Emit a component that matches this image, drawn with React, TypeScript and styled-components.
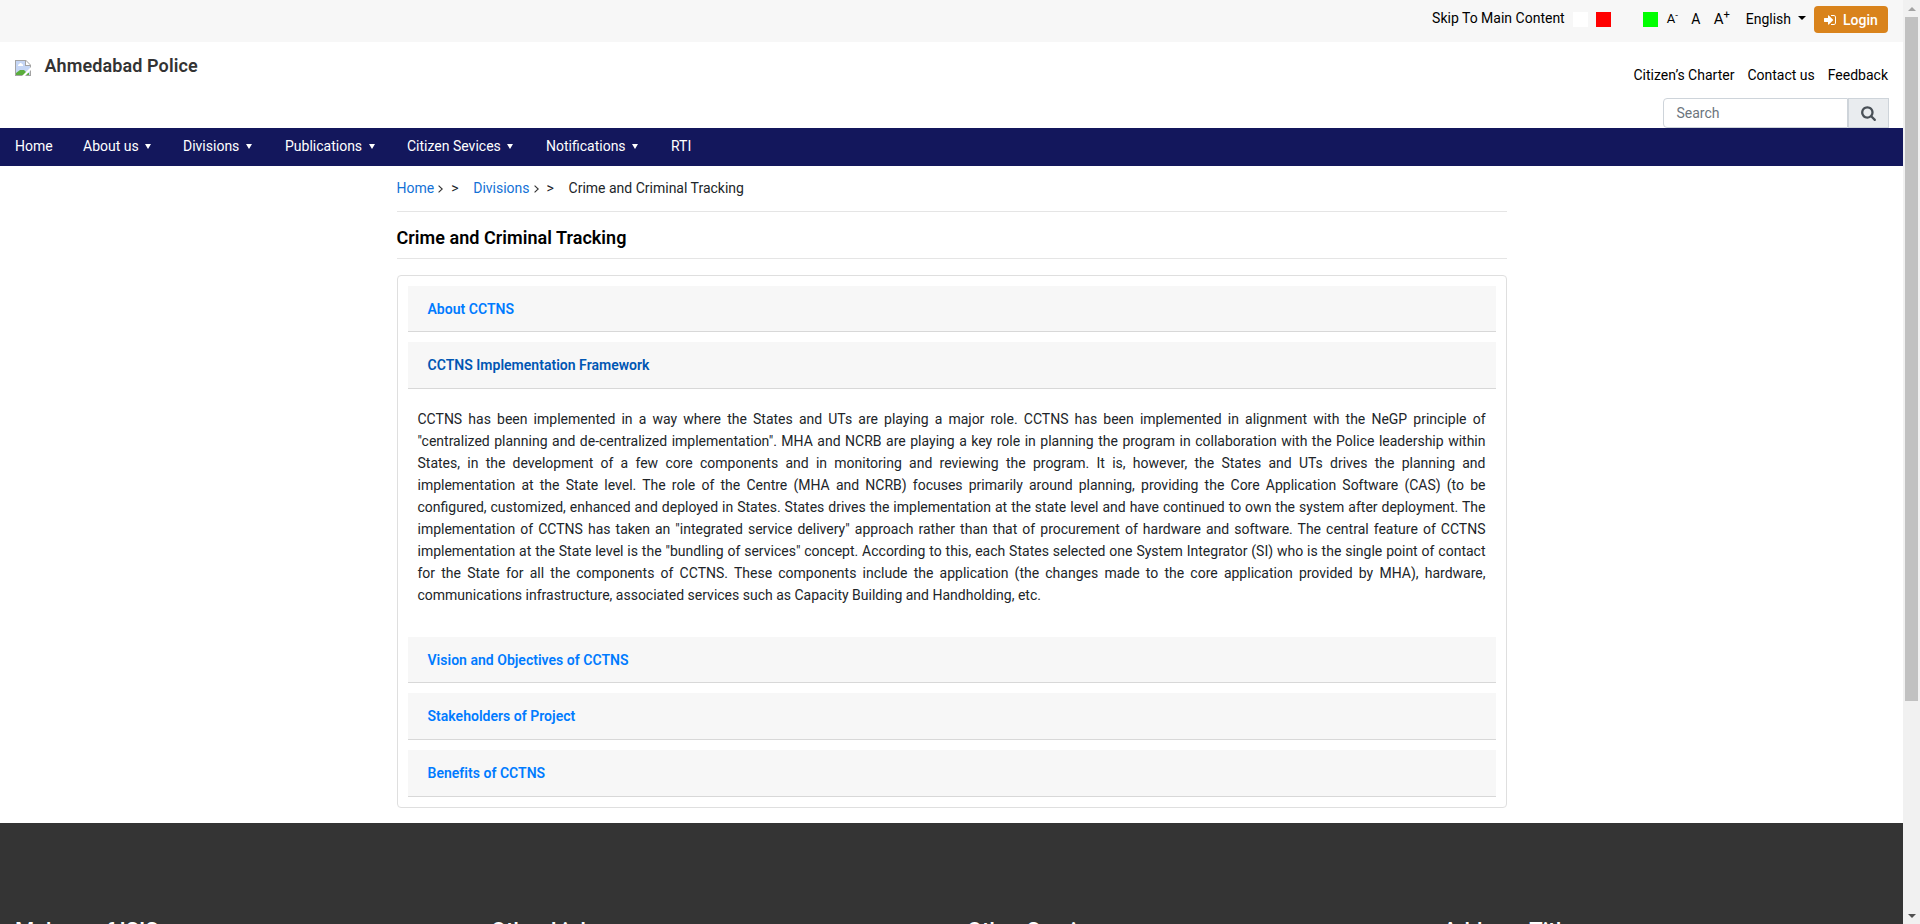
import React from 'react';
import styled, { createGlobalStyle } from 'styled-components';

const GlobalStyle = createGlobalStyle`
  *, *::before, *::after { box-sizing: border-box; }
  html, body { margin: 0; height: 924px; overflow: hidden; }
  body {
    background: #fff;
    color: #212529;
    font-family: Roboto, 'Liberation Sans', sans-serif;
    font-size: 14px;
    line-height: 22px;
  }
  a { text-decoration: none; color: inherit; }
  h1, h2, h3, p { margin: 0; }
`;

const Window = styled.div`
  display: flex;
  height: 924px;
  overflow: hidden;
`;

const Page = styled.div`
  display: flex;
  flex-direction: column;
  width: 1903px;
  height: 924px;
  overflow: hidden;
`;

const TopBar = styled.div`
  flex: none;
  display: flex;
  justify-content: flex-end;
  align-items: flex-start;
  height: 42px;
  padding: 6px 15px 0 0;
  background: #f7f7f7;
  color: #000;
`;

const SkipLink = styled.a`
  margin: 1px 8px 0 0;
`;

const Swatch = styled.span<{ $color: string }>`
  width: 15px;
  height: 15px;
  margin: 6px 8.5px 0 0;
  background: ${(p) => p.$color};
`;

const FontSize = styled.a<{ $size: number; $width: number }>`
  width: ${(p) => p.$width}px;
  margin-top: 2px;
  font-size: ${(p) => p.$size}px;
  white-space: nowrap;
  sup {
    position: relative;
    top: -0.5em;
    font-size: 75%;
    line-height: 0;
    vertical-align: baseline;
  }
`;

const Language = styled.a`
  display: flex;
  align-items: center;
  gap: 7px;
  margin: 2px 8px 0 0;
  &::after {
    content: '';
    margin-top: -3px;
    border: 4px solid transparent;
    border-top-color: #000;
    border-bottom: 0;
  }
`;

const LoginButton = styled.a`
  display: flex;
  align-items: center;
  gap: 7px;
  width: 74px;
  height: 27px;
  padding-left: 10px;
  border-radius: 4px;
  background: #d9831c;
  color: #fff;
  font-weight: 500;
`;

const Header = styled.header`
  flex: none;
  display: flex;
  justify-content: space-between;
  height: 86px;
  padding: 0 14px 0 15px;
`;

const Brand = styled.a`
  display: flex;
  align-items: flex-start;
  gap: 13.5px;
  padding-top: 13px;
  color: #333;
  font-size: 18px;
  font-weight: 600;
  letter-spacing: 0.1px;
  svg { margin-top: 5px; }
`;

const HeaderRight = styled.div`
  display: flex;
  flex-direction: column;
  align-items: flex-end;
  padding-top: 22px;
`;

const QuickLinks = styled.div`
  display: flex;
  gap: 13px;
  padding-right: 1px;
  color: #000;
`;

const SearchBox = styled.div`
  display: flex;
  width: 226px;
  height: 30px;
  margin-top: 12px;
`;

const SearchField = styled.div`
  width: 185px;
  padding: 3px 12.5px;
  border: 1px solid #ced4da;
  border-radius: 4px 0 0 4px;
  color: #6c757d;
`;

const SearchButton = styled.div`
  display: flex;
  align-items: center;
  justify-content: center;
  width: 41px;
  border: 1px solid #ced4da;
  background: #e9ecef;
`;

const Nav = styled.nav`
  flex: none;
  display: flex;
  height: 38px;
  padding: 7px 15px 0;
  background: #13175c;
  color: #fff;
`;

const NavItem = styled.a<{ $width: number }>`
  display: flex;
  align-items: center;
  align-self: flex-start;
  gap: 6.5px;
  width: ${(p) => p.$width}px;
  white-space: nowrap;
`;

const NavArrow = styled.span`
  margin-top: 1px;
  border: 3px solid transparent;
  border-top: 5px solid #fff;
  border-bottom: 0;
`;

const Main = styled.main`
  flex: none;
  width: 1110px;
  height: 657px;
  margin: 0 auto;
`;

const Breadcrumb = styled.div`
  display: flex;
  height: 46px;
  padding-top: 11px;
  border-bottom: 1px solid #e5e5e5;
`;

const Crumb = styled.a`
  color: #1371d6;
`;

const Chevron = styled.svg`
  width: 5px;
  height: 8px;
  margin: 8px 8px 0 4px;
`;

const Separator = styled.span`
  width: 22px;
`;

const Title = styled.h1`
  height: 47px;
  padding-top: 15px;
  border-bottom: 1px solid #e5e5e5;
  color: #000;
  font-size: 18px;
  font-weight: 600;
  letter-spacing: 0.04px;
`;

const Accordion = styled.section`
  margin-top: 16px;
  padding: 10px;
  border: 1px solid #dfdfdf;
  border-radius: 4px;
`;

const Panel = styled.div`
  margin-bottom: 10px;
  &:last-child { margin-bottom: 0; }
`;

const PanelHeader = styled.h2<{ $height: number; $active?: boolean }>`
  height: ${(p) => p.$height}px;
  padding: 12px 20px;
  border-bottom: 1px solid #d8d8d8;
  background: #f7f7f7;
  color: ${(p) => (p.$active ? '#0056b3' : '#007bff')};
  font-size: 14px;
  font-weight: 600;
  letter-spacing: 0.02px;
  line-height: 22px;
`;

const PanelBody = styled.p`
  height: 238px;
  padding: 19px 10px 0;
  text-align: justify;
`;

const Footer = styled.footer`
  flex: 1 0 101px;
  display: grid;
  grid-template-columns: repeat(4, 476px);
  padding: 95px 0 0 15px;
  overflow: hidden;
  background: #343434;
`;

const FooterTitle = styled.h3`
  color: #fff;
  font-size: 22px;
  font-weight: 500;
  line-height: 26px;
`;

const Scrollbar = styled.div`
  flex: none;
  display: flex;
  flex-direction: column;
  align-items: center;
  justify-content: space-between;
  width: 17px;
  height: 924px;
  padding: 7px 0 6px;
  background: #f1f1f1;
`;

const ScrollArrow = styled.span<{ $up?: boolean }>`
  border: 4px solid transparent;
  ${(p) =>
    p.$up
      ? 'border-bottom-color: #a3a3a3; border-top: 0;'
      : 'border-top-color: #505050; border-bottom: 0;'}
`;

const ScrollThumb = styled.span`
  width: 13px;
  height: 684px;
  margin: 6px 0 auto;
  background: #c1c1c1;
`;

const LoginIcon = () => (
  <svg width="12" height="14" viewBox="0 0 1536 1792" fill="#fff">
    <path d="M1184 896q0 26-19 45l-544 544q-19 19-45 19t-45-19-19-45v-288H64q-26 0-45-19T0 1088V704q0-26 19-45t45-19h448V352q0-26 19-45t45-19 45 19l544 544q19 19 19 45zm352-352v704q0 119-84.5 203.5T1248 1536H928q-13 0-22.5-9.5T896 1504q-1-4-1-20t-.5-26.5 3-23.5 10-19.5 20.5-6.5h320q66 0 113-47t47-113V544q0-66-47-113t-113-47H936l-11.5-1-11.5-3-8-5.5-7-9-2-13.5q-1-4-1-20t-.5-26.5 3-23.5 10-19.5T928 256h320q119 0 203.5 84.5T1536 544z" />
  </svg>
);

const SearchIcon = () => (
  <svg width="15" height="16" viewBox="0 0 1664 1792" fill="#495057">
    <path d="M1152 832q0-185-131.5-316.5T704 384 387.5 515.5 256 832t131.5 316.5T704 1280t316.5-131.5T1152 832zm512 832q0 52-38 90t-90 38q-54 0-90-38l-343-342q-179 124-399 124-143 0-273.5-55.5t-225-150-150-225T0 832t55.5-273.5 150-225 225-150T704 128t273.5 55.5 225 150 150 225T1408 832q0 220-124 399l343 343q37 37 37 90z" />
  </svg>
);

const BrokenImage = () => (
  <svg width="16" height="16" viewBox="0 0 16 16">
    <path d="M0 0H11L16 5V16H0Z" fill="#a3a3a3" />
    <path d="M1 1H10V6H15V15H1Z" fill="#c5d6f5" />
    <path d="M3 5.5C3 4.3 4.5 4 5 3C6.5 2.6 7 4 8 4.5V6H3Z" fill="#fff" />
    <path d="M1 15V13L5 10H9L11 12L14 13V15Z" fill="#5aad3c" />
    <path d="M11 1L15 5H11Z" fill="#fff" />
    <path d="M7 16L16 7V10L10 16Z" fill="#fff" />
  </svg>
);

const CrumbArrow = () => (
  <Chevron viewBox="0 0 5 8" fill="none" stroke="#333" strokeWidth="1.1">
    <path d="M0.6 0.6L4.2 4L0.6 7.4" />
  </Chevron>
);

const navItems = [
  { label: 'Home', width: 68, menu: false },
  { label: 'About us', width: 100, menu: true },
  { label: 'Divisions', width: 102, menu: true },
  { label: 'Publications', width: 122, menu: true },
  { label: 'Citizen Sevices', width: 139, menu: true },
  { label: 'Notifications', width: 125, menu: true },
  { label: 'RTI', width: 40, menu: false },
];

const panels: { title: string; height: number; body?: string }[] = [
  { title: 'About CCTNS', height: 46 },
  {
    title: 'CCTNS Implementation Framework',
    height: 47,
    body: 'CCTNS has been implemented in a way where the States and UTs are playing a major role. CCTNS has been implemented in alignment with the NeGP principle of "centralized planning and de-centralized implementation". MHA and NCRB are playing a key role in planning the program in collaboration with the Police leadership within States, in the development of a few core components and in monitoring and reviewing the program. It is, however, the States and UTs drives the planning and implementation at the State level. The role of the Centre (MHA and NCRB) focuses primarily around planning, providing the Core Application Software (CAS) (to be configured, customized, enhanced and deployed in States. States drives the implementation at the state level and have continued to own the system after deployment. The implementation of CCTNS has taken an "integrated service delivery" approach rather than that of procurement of hardware and software. The central feature of CCTNS implementation at the State level is the "bundling of services" concept. According to this, each States selected one System Integrator (SI) who is the single point of contact for the State for all the components of CCTNS. These components include the application (the changes made to the core application provided by MHA), hardware, communications infrastructure, associated services such as Capacity Building and Handholding, etc.',
  },
  { title: 'Vision and Objectives of CCTNS', height: 46 },
  { title: 'Stakeholders of Project', height: 47 },
  { title: 'Benefits of CCTNS', height: 47 },
];

const footerTitles = ['Makers of ISIS', 'Other Links', 'Other Services', 'Address Title'];

export default function App() {
  return (
    <>
      <GlobalStyle />
      <Window>
        <Page>
          <TopBar>
            <SkipLink>Skip To Main Content</SkipLink>
            <Swatch $color="#ffffff" />
            <Swatch $color="#ff0000" />
            <Swatch $color="#f7f7f7" />
            <Swatch $color="#00ff00" />
            <FontSize $size={13} $width={24.5}>A<sup>-</sup></FontSize>
            <FontSize $size={14} $width={22.5}>A</FontSize>
            <FontSize $size={15} $width={32}>A<sup>+</sup></FontSize>
            <Language>English</Language>
            <LoginButton><LoginIcon />Login</LoginButton>
          </TopBar>
          <Header>
            <Brand><BrokenImage />Ahmedabad Police</Brand>
            <HeaderRight>
              <QuickLinks>
                <a>Citizen’s Charter</a>
                <a>Contact us</a>
                <a>Feedback</a>
              </QuickLinks>
              <SearchBox>
                <SearchField>Search</SearchField>
                <SearchButton><SearchIcon /></SearchButton>
              </SearchBox>
            </HeaderRight>
          </Header>
          <Nav>
            {navItems.map((item) => (
              <NavItem key={item.label} $width={item.width}>
                {item.label}
                {item.menu && <NavArrow />}
              </NavItem>
            ))}
          </Nav>
          <Main>
            <Breadcrumb>
              <Crumb>Home</Crumb>
              <CrumbArrow />
              <Separator>&gt;</Separator>
              <Crumb>Divisions</Crumb>
              <CrumbArrow />
              <Separator>&gt;</Separator>
              <span>Crime and Criminal Tracking</span>
            </Breadcrumb>
            <Title>Crime and Criminal Tracking</Title>
            <Accordion>
              {panels.map((panel) => (
                <Panel key={panel.title}>
                  <PanelHeader $height={panel.height} $active={!!panel.body}>
                    {panel.title}
                  </PanelHeader>
                  {panel.body && <PanelBody>{panel.body}</PanelBody>}
                </Panel>
              ))}
            </Accordion>
          </Main>
          <Footer>
            {footerTitles.map((title) => (
              <FooterTitle key={title}>{title}</FooterTitle>
            ))}
          </Footer>
        </Page>
        <Scrollbar>
          <ScrollArrow $up />
          <ScrollThumb />
          <ScrollArrow />
        </Scrollbar>
      </Window>
    </>
  );
}
